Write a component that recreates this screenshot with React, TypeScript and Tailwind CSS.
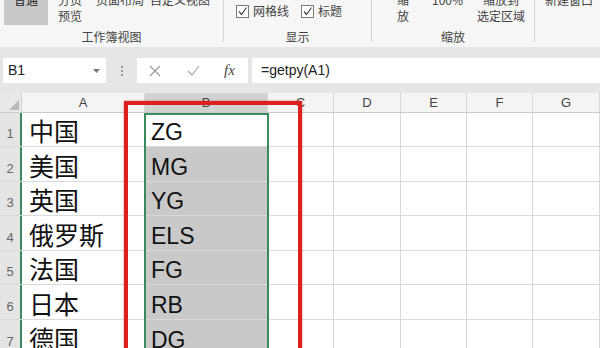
import React from "react"

const ROW_H = [34, 35, 34, 35, 34, 35, 35]
const NAMES = ["中国", "美国", "英国", "俄罗斯", "法国", "日本", "德国"]
const CODES = ["ZG", "MG", "YG", "ELS", "FG", "RB", "DG"]
const COLS = [
  { key: "A", w: "w-[123px]" },
  { key: "B", w: "w-[123px]" },
  { key: "C", w: "w-[66px]" },
  { key: "D", w: "w-[67px]" },
  { key: "E", w: "w-[66px]" },
  { key: "F", w: "w-[66px]" },
  { key: "G", w: "w-[67px]" },
]

const Check = () => (
  <div className="w-[13px] h-[13px] border border-[#7a7a7a] bg-white flex items-center justify-center">
    <svg width="11" height="11" viewBox="0 0 11 11">
      <path d="M2 5.5 L4.5 8.5 L9.5 1.5" fill="none" stroke="#444" strokeWidth="1.2" />
    </svg>
  </div>
)

const Sep = () => <div className="w-px h-[42px] bg-[#d4d4d4] shrink-0" />

const Ribbon = () => (
  <div className="h-[47px] bg-[#f6f6f6] flex overflow-hidden text-[12px] leading-[16px] text-[#444]">
    <div className="w-[223px] flex flex-col">
      <div className="flex mt-[-8px] h-[37px]">
        <div className="ml-[4px] w-[44px] h-[33px] bg-[#c8c8c8] text-center text-[#222]">普通</div>
        <div className="ml-[10px]">分页<br />预览</div>
        <div className="ml-[14px]">页面布局</div>
        <div className="ml-[6px]">自定义视图</div>
      </div>
      <div className="text-center">工作簿视图</div>
    </div>
    <Sep />
    <div className="w-[147px] flex flex-col">
      <div className="flex items-center mt-[-2px] h-[26px] pl-[12px]">
        <Check />
        <span className="ml-[4px]">网格线</span>
        <div className="ml-[12px]"><Check /></div>
        <span className="ml-[4px]">标题</span>
      </div>
      <div className="text-center mt-[5px]">显示</div>
    </div>
    <Sep />
    <div className="w-[162px] flex flex-col">
      <div className="flex mt-[-8px] h-[37px]">
        <div className="ml-[25px] w-[12px]">缩<br />放</div>
        <div className="ml-[23px]">100%</div>
        <div className="ml-[14px] text-center">缩放到<br />选定区域</div>
      </div>
      <div className="text-center">缩放</div>
    </div>
    <Sep />
    <div className="flex-1">
      <div className="mt-[-8px] ml-[10px]">新建窗口</div>
    </div>
  </div>
)

const FormulaBar = () => (
  <div className="h-[46px] bg-[#e6e6e6] pt-[11px] pb-[10px] flex text-[14px] text-[#222]">
    <div className="ml-[3px] w-[103px] h-[25px] bg-white flex items-center pl-[5px] pr-[6px] justify-between">
      <span>B1</span>
      <svg width="7" height="4" viewBox="0 0 7 4"><path d="M0 0 H7 L3.5 4 Z" fill="#777" /></svg>
    </div>
    <div className="w-[31px] flex flex-col items-center justify-center gap-[2px]">
      <div className="w-[2px] h-[2px] bg-[#999]" />
      <div className="w-[2px] h-[2px] bg-[#999]" />
      <div className="w-[2px] h-[2px] bg-[#999]" />
    </div>
    <div className="w-[111px] h-[25px] bg-white flex items-center">
      <svg className="ml-[12px]" width="12" height="12" viewBox="0 0 12 12">
        <path d="M1 1 L11 11 M11 1 L1 11" stroke="#9a9a9a" strokeWidth="1.2" />
      </svg>
      <svg className="ml-[26px]" width="13" height="11" viewBox="0 0 13 11">
        <path d="M1 6 L5 10 L12 1" fill="none" stroke="#a8a8a8" strokeWidth="1.2" />
      </svg>
      <span className="ml-[24px] italic text-[15px] text-[#444]" style={{ fontFamily: '"Liberation Serif", serif' }}>fx</span>
    </div>
    <div className="ml-[4px] flex-1 h-[25px] bg-white flex items-center pl-[9px]">=getpy(A1)</div>
  </div>
)

export default function App() {
  return (
    <div
      className="relative w-[600px] h-[348px] overflow-hidden bg-white"
      style={{ fontFamily: '"Liberation Sans", "Noto Sans CJK SC", sans-serif' }}
    >
      <div style={{ fontFamily: '"Noto Sans CJK SC", sans-serif' }}>
        <Ribbon />
      </div>
      <FormulaBar />
      {/* column headers */}
      <div className="flex h-[20px] bg-[#f4f4f4] border-b border-[#c9c9c9] text-[13px] text-[#444]">
        <div className="w-[22px] bg-[#e8e8e8] border-r border-[#d0d0d0] flex items-end justify-end p-[2px]">
          <svg width="10" height="10" viewBox="0 0 10 10"><path d="M10 0 V10 H0 Z" fill="#b8b8b8" /></svg>
        </div>
        {COLS.map((c) => (
          <div
            key={c.key}
            className={`${c.w} flex items-center justify-center border-r border-[#d8d8d8] ${c.key === "B" ? "bg-[#d2d2d2]" : ""}`}
          >
            {c.key}
          </div>
        ))}
      </div>
      {/* rows */}
      {ROW_H.map((h, i) => (
        <div key={i} className="flex border-b border-[#dadada]" style={{ height: h }}>
          <div className="w-[22px] bg-[#e4e4e4] border-r-2 border-[#3a8a5e] flex items-end justify-center pb-[3px] text-[13px] text-[#666]">
            {i + 1}
          </div>
          <div
            className="w-[123px] border-r border-[#dadada] flex items-end pl-[7px] text-[25px] leading-[31px] text-[#111]"
            style={{ fontFamily: '"Noto Sans CJK SC", sans-serif' }}
          >
            {NAMES[i]}
          </div>
          <div className={`w-[123px] border-r border-[#dadada] flex items-end pl-[6px] text-[23px] leading-[27px] text-[#111] ${i > 0 ? "bg-[#c9c9c9]" : ""}`}>
            {CODES[i]}
          </div>
          {COLS.slice(2).map((c) => (
            <div key={c.key} className={`${c.w} border-r border-[#dadada]`} />
          ))}
        </div>
      ))}
      {/* selection outline */}
      <div className="absolute left-[144px] top-[113px] w-[125px] h-[260px] border-2 border-[#3a8a5e] pointer-events-none" />
      {/* red annotation box */}
      <div className="absolute left-[124px] top-[101px] w-[178px] h-[280px] border-4 border-[#dc1f1f] shadow-[0_0_2px_rgba(200,0,0,0.5)] pointer-events-none" />
    </div>
  )
}
